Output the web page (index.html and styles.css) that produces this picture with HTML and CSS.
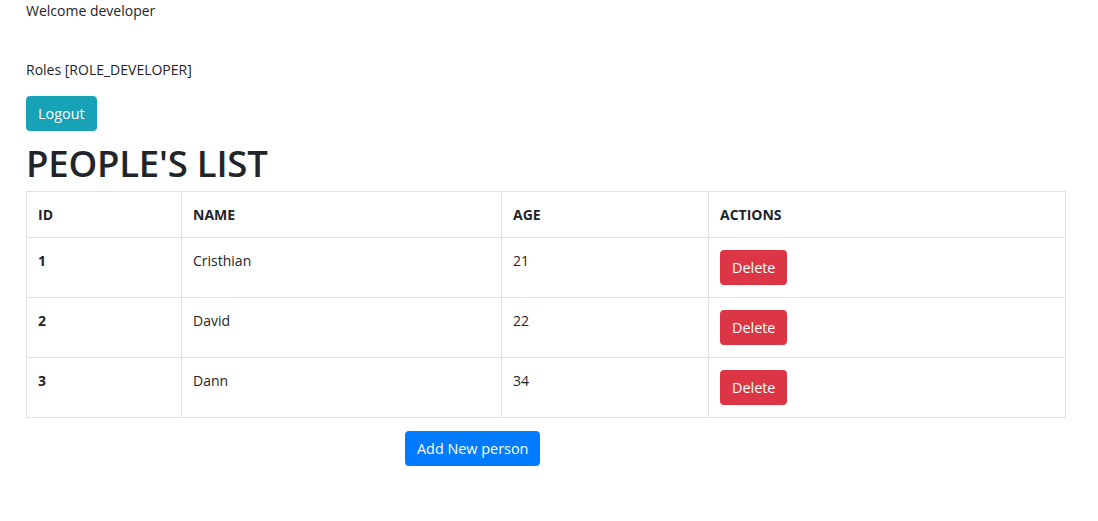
FILE: index.html
```html
<!DOCTYPE html>
<html lang="en">
<head>
<meta charset="utf-8">
<title>People's list</title>
<link rel="stylesheet" href="styles.css">
</head>
<body>
<div class="page">
  <p class="welcome">Welcome developer</p>
  <p class="roles">Roles [ROLE_DEVELOPER]</p>
  <button class="btn btn-info">Logout</button>
  <h1 class="title">PEOPLE'S LIST</h1>
  <table class="people">
    <colgroup>
      <col class="c-id">
      <col class="c-name">
      <col class="c-age">
      <col class="c-act">
    </colgroup>
    <thead>
      <tr>
        <th>ID</th>
        <th>NAME</th>
        <th>AGE</th>
        <th>ACTIONS</th>
      </tr>
    </thead>
    <tbody>
      <tr>
        <th>1</th>
        <td>Cristhian</td>
        <td>21</td>
        <td><button class="btn btn-danger">Delete</button></td>
      </tr>
      <tr>
        <th>2</th>
        <td>David</td>
        <td>22</td>
        <td><button class="btn btn-danger">Delete</button></td>
      </tr>
      <tr>
        <th>3</th>
        <td>Dann</td>
        <td>34</td>
        <td><button class="btn btn-danger">Delete</button></td>
      </tr>
    </tbody>
  </table>
  <div class="add-row">
    <button class="btn btn-primary">Add New person</button>
  </div>
</div>
</body>
</html>
```
FILE: styles.css
```css
html, body {
  margin: 0;
  padding: 0;
  background: #fff;
}
body {
  font-family: "Open Sans", "Noto Sans", sans-serif;
  font-size: 14px;
  line-height: 21.6px;
  color: #212529;
}
.page {
  padding: 0 32px 0 26px;
}
.welcome {
  margin: 0 0 37px;
}
.roles {
  margin: 0 0 16px;
}
.btn {
  font-family: inherit;
  font-size: 14.4px;
  line-height: 21px;
  padding: 6px 11px;
  border: 1px solid transparent;
  border-radius: 3.6px;
  color: #fff;
  cursor: pointer;
  display: inline-block;
}
.btn-info { background: #17a2b8; border-color: #17a2b8; }
.btn-danger { background: #dc3545; border-color: #dc3545; }
.btn-primary { background: #007bff; border-color: #007bff; }
.title {
  font-size: 36.5px;
  font-weight: 600;
  line-height: 43px;
  margin: 11px 0 6px;
  letter-spacing: -0.2px;
}
.people {
  width: 1039px;
  table-layout: fixed;
  border-collapse: collapse;
  border: 1px solid #dee2e6;
}
.c-id { width: 155px; }
.c-name { width: 320px; }
.c-age { width: 207px; }
.c-act { width: 357px; }
.people th, .people td {
  border: 1px solid #dee2e6;
  padding: 12px 11px;
  text-align: left;
  vertical-align: top;
  font-size: 14px;
}
.people thead th {
  font-weight: 700;
  vertical-align: bottom;
  padding-bottom: 11px;
}
.people tbody th { font-weight: 700; }
.add-row {
  padding: 13px 0 0 379px;
}
```
